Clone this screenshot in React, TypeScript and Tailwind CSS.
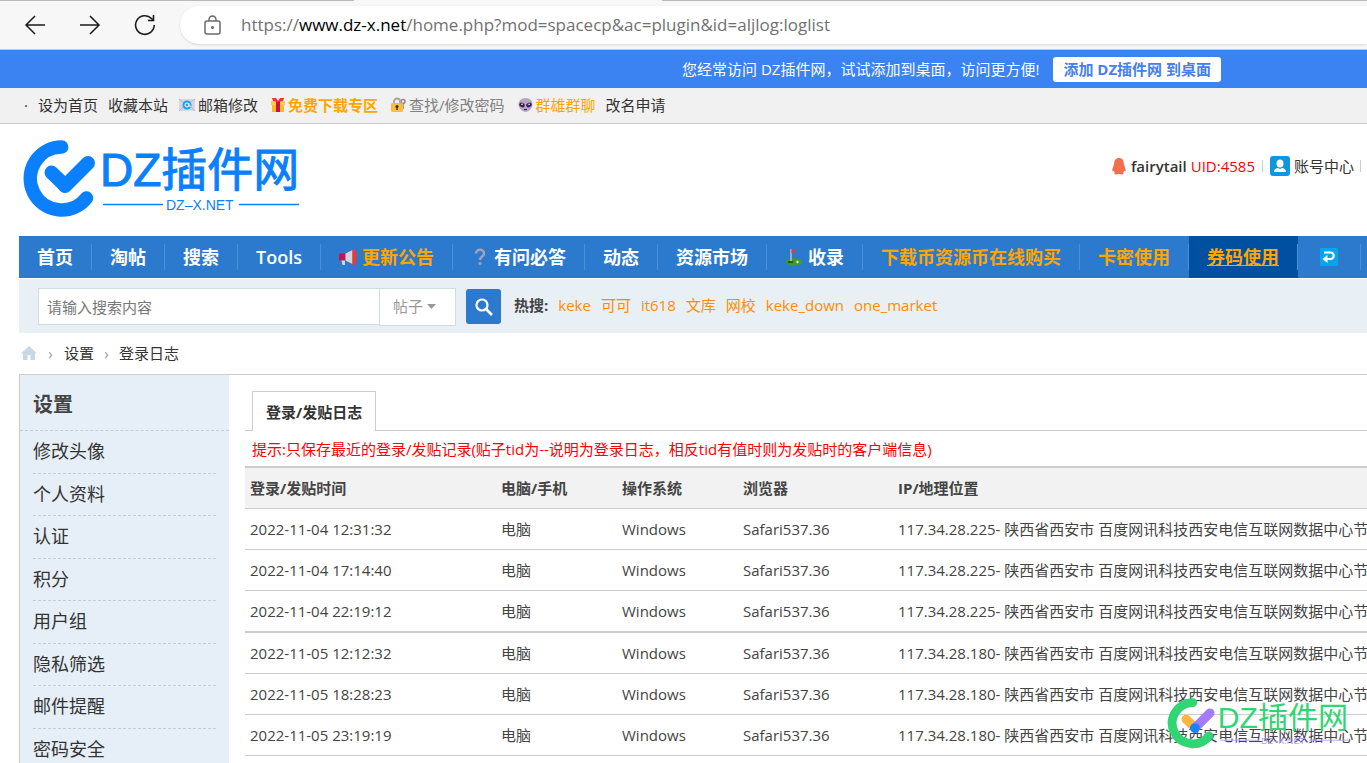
import React, { useState } from 'react';

const MailIcon = () => (
  <svg width="16" height="16" viewBox="0 0 16 16" className="shrink-0">
    <rect y="2" width="16" height="12" fill="#d9d5e2" />
    <path d="M0 2l8 6 8-6M0 14l6-6M16 14l-6-6" stroke="#b9b3c9" fill="none" />
    <circle cx="8" cy="8" r="4.5" fill="#1ba4ef" />
    <circle cx="8" cy="8" r="2" fill="none" stroke="#fff" strokeWidth="1" />
    <path d="M10 6v3q1 1 2 0" stroke="#fff" fill="none" strokeWidth=".8" />
  </svg>
);

const GiftIcon = () => (
  <svg width="14" height="16" viewBox="0 0 14 16" className="shrink-0">
    <rect x="1" y="6" width="12" height="9" fill="#fdb92c" />
    <rect y="4" width="14" height="4" fill="#ffcd45" />
    <rect x="5" y="4" width="4" height="11" fill="#c9123f" />
    <path d="M7 5L2 4 1 1l4 0 2 3 2-3h4l-1 3z" fill="#ef3038" />
  </svg>
);

const LockKeyIcon = () => (
  <svg width="15" height="16" viewBox="0 0 15 16" className="shrink-0">
    <circle cx="12" cy="4.5" r="2" fill="none" stroke="#8f8996" strokeWidth="1.6" />
    <path d="M12 6v6" stroke="#8f8996" strokeWidth="1.6" />
    <path d="M3 8V4.5a3 3 0 0 1 6 0V8" fill="none" stroke="#a8a3ad" strokeWidth="1.8" />
    <rect x="0" y="6" width="12" height="9" rx="1.5" fill="#f9bd3a" />
    <circle cx="6" cy="9.5" r="1.5" fill="#3d2c4a" />
    <path d="M6 10v3" stroke="#3d2c4a" strokeWidth="1.4" />
  </svg>
);

const AlienIcon = () => (
  <svg width="15" height="16" viewBox="0 0 15 16" className="shrink-0">
    <path d="M7.5 1C3 1 .5 4 .5 7.500S4 15 7.500 15s7-4 7-7.500S12 1 7.500 1z" fill="#b4a9bf" />
    <ellipse cx="4" cy="8" rx="2.8" ry="2.2" transform="rotate(25 4 8)" fill="#3d1f55" />
    <ellipse cx="11" cy="8" rx="2.8" ry="2.2" transform="rotate(-25 11 8)" fill="#3d1f55" />
    <circle cx="4" cy="7.3" r=".8" fill="#fff" />
    <circle cx="11" cy="7.3" r=".8" fill="#fff" />
    <path d="M6 12.5h3" stroke="#3d1f55" strokeWidth="1.2" />
  </svg>
);

const MegaphoneIcon = () => (
  <svg width="18" height="18" viewBox="0 0 18 18" className="shrink-0">
    <path d="M0 5.5h6.500v7H0z" fill="#c9124b" />
    <path d="M2.500 12.500H6V17H3.500z" fill="#d8d4de" />
    <path d="M6.500 5.500l7-3.500v14l-7-3.500z" fill="#d8d4de" />
    <path d="M13.500 1.500C15 0 17.500 1 17.500 9s-2.500 9-4 7.500z" fill="#f43535" />
  </svg>
);

const QuestionIcon = () => (
  <svg width="18" height="18" viewBox="0 0 18 18" className="shrink-0">
    <path d="M5 5.500C5 .5 13 .5 13 5.500 13 8.500 9 8.500 9 12" fill="none" stroke="#a9a0b8" strokeWidth="2.500" />
    <circle cx="9" cy="15.500" r="1.600" fill="#a9a0b8" />
  </svg>
);

const GolfIcon = () => (
  <svg width="18" height="18" viewBox="0 0 18 18" className="shrink-0">
    <ellipse cx="9" cy="14" rx="8.500" ry="3.700" fill="#3f9b28" />
    <path d="M6 1v13" stroke="#d6d2dc" strokeWidth="1.200" />
    <path d="M6.500 1l5 2-5 2.500z" fill="#ef3434" />
    <path d="M3 14h5" stroke="#1f3d1c" strokeWidth="1.500" />
    <circle cx="12.500" cy="14" r="1.200" fill="#fff" />
  </svg>
);

const ReturnIcon = () => (
  <svg width="18" height="18" viewBox="0 0 18 18" className="shrink-0">
    <rect width="18" height="18" rx="1.5" fill="#06a5ee" />
    <path d="M4 4.500h6.500a3.200 3.200 0 0 1 0 6.500H6" fill="none" stroke="#fff" strokeWidth="2.200" />
    <path d="M7.500 7v8l-5-4z" fill="#fff" />
  </svg>
);

const UserIcon = () => (
  <svg width="20" height="20" viewBox="0 0 20 20" className="shrink-0">
    <rect width="20" height="20" rx="3" fill="#1296db" />
    <ellipse cx="10" cy="7.500" rx="3.500" ry="4" fill="#fff" />
    <path d="M4 16c0-3 2-4 4-4l2 1 2-1c2 0 4 1 4 4z" fill="#fff" />
  </svg>
);

const QqIcon = () => (
  <svg width="14" height="17" viewBox="0 0 14 17" className="shrink-0">
    <path d="M7 0C4 0 2.200 2.200 2.200 5.500 2 7.500.3 9.500.3 12.500c0 1.200.9 1 1.500.3.2.9.600 1.500 1.100 2-1 .7-.6 1.700 1 1.700 1.200 0 2.300-.2 3.100-.7.8.5 1.900.7 3.100.7 1.600 0 2-1 1-1.700.5-.5.9-1.100 1.100-2 .6.700 1.500.9 1.500-.3 0-3-1.700-5-1.900-7C11.800 2.200 10 0 7 0z" fill="#f3704f" />
  </svg>
);

type LogoProps = {
  className: string;
  ring: string;
  left: string;
  right: string;
  text: string;
  sub: string;
  dot?: string;
  weight?: number;
};

const Logo = ({ className, ring, left, right, text, sub, dot, weight = 0 }: LogoProps) => (
  <svg viewBox="0 0 280 78" className={className} role="img" aria-label="DZ插件网">
    <path d="M38.700 7A31.500 31.500 0 1 0 63.500 58" fill="none" stroke={ring} strokeWidth="13.500" strokeLinecap="round" />
    <path d="M28.500 32.500L42 45.500" stroke={left} strokeWidth="14" strokeLinecap="round" />
    <path d="M42 46L65 23" stroke={right} strokeWidth="14" strokeLinecap="round" />
    {dot && <circle cx="42" cy="46" r="7.5" fill={dot} />}
    <text x="77" y="46" fontSize="46" fill={text} stroke={text} strokeWidth={weight} className="font-['Liberation_Sans','Noto_Sans_CJK_SC',sans-serif]">DZ插件网</text>
    <path d="M80 64.500h60M216 64.500h60" stroke={sub} strokeWidth="1.500" />
    <text x="143" y="70" fontSize="14" fill={sub} className="font-['Liberation_Sans',sans-serif]">DZ–X.NET</text>
  </svg>
);

const navItems = [
  { label: '首页' },
  { label: '淘帖' },
  { label: '搜索' },
  { label: 'Tools' },
  { label: '更新公告', icon: <MegaphoneIcon />, hot: true },
  { label: '有问必答', icon: <QuestionIcon /> },
  { label: '动态' },
  { label: '资源市场' },
  { label: '收录', icon: <GolfIcon /> },
  { label: '下载币资源币在线购买', hot: true },
  { label: '卡密使用', hot: true },
  { label: '券码使用', hot: true, active: true },
];

const hotWords = ['keke', '可可', 'it618', '文库', '网校', 'keke_down', 'one_market'];

const sideItems = ['修改头像', '个人资料', '认证', '积分', '用户组', '隐私筛选', '邮件提醒', '密码安全'];

const logs = [
  { time: '2022-11-04 12:31:32', ip: '117.34.28.225' },
  { time: '2022-11-04 17:14:40', ip: '117.34.28.225' },
  { time: '2022-11-04 22:19:12', ip: '117.34.28.225' },
  { time: '2022-11-05 12:12:32', ip: '117.34.28.180' },
  { time: '2022-11-05 18:28:23', ip: '117.34.28.180' },
  { time: '2022-11-05 23:19:19', ip: '117.34.28.180' },
];

const BrowserBar = () => (
  <div className="bg-[#f7f7f7] border-b border-[#c6c6c6]">
    <div className="flex h-px">
      <div className="w-[354px] bg-[#b9b9b9]" />
      <div className="w-[308px]" />
      <div className="flex-1 bg-[#b9b9b9]" />
    </div>
    <div className="flex items-center h-12 pl-6">
      <button aria-label="后退" className="w-[55px]">
        <svg width="22" height="20" viewBox="0 0 22 20" fill="none" stroke="#1b1b1b" strokeWidth="1.5">
          <path d="M21 10H2M11 1L2 10l9 9" />
        </svg>
      </button>
      <button aria-label="前进" className="w-[55px]">
        <svg width="22" height="20" viewBox="0 0 22 20" fill="none" stroke="#1b1b1b" strokeWidth="1.5">
          <path d="M1 10h19M11 1l9 9-9 9" />
        </svg>
      </button>
      <button aria-label="刷新" className="w-[46px]">
        <svg width="22" height="22" viewBox="0 0 22 22" fill="none" stroke="#1b1b1b" strokeWidth="1.6">
          <path d="M20.200 11A9.300 9.300 0 1 1 17.500 4.500L19.500 6.500" />
          <path d="M19.500 1v5.500H14" />
        </svg>
      </button>
      <div className="flex flex-1 items-center h-[38px] pl-6 rounded-l-full bg-white whitespace-nowrap shadow-sm">
        <svg width="17" height="20" viewBox="0 0 17 20" fill="none" stroke="#6b6b6b" strokeWidth="1.5" className="shrink-0">
          <rect x="1" y="6" width="15" height="13" rx="2" />
          <path d="M5 6V4.500a3.500 3.500 0 0 1 7 0V6" />
          <circle cx="8.500" cy="12.500" r=".8" fill="#6b6b6b" />
        </svg>
        <span className="ml-5 text-[17px] text-[#717171]">
          https://<span className="text-black">www.dz-x.net</span>/home.php?mod=spacecp&amp;ac=plugin&amp;id=aljlog:loglist
        </span>
      </div>
    </div>
  </div>
);

const TopBar = () => (
  <>
    <div className="flex items-center justify-end h-[38px] pr-[146px] gap-[14px] bg-[#3b82f2] text-white">
      <span>您经常访问 DZ插件网，试试添加到桌面，访问更方便!</span>
      <button className="h-[25px] px-[10px] rounded-[3px] bg-white font-bold text-[#4480ee]">
        添加 DZ插件网 到桌面
      </button>
    </div>
    <div className="flex items-center h-9 pl-6 pb-0.5 bg-[#f1f1f1] border-b border-[#cdcdcd]">
      <span className="w-[14px]">·</span>
      <a href="#" className="mr-[10px]">设为首页</a>
      <a href="#" className="mr-[11px]">收藏本站</a>
      <a href="#" className="flex items-center gap-[3px] mr-[13px]"><MailIcon />邮箱修改</a>
      <a href="#" className="flex items-center gap-[3px] mr-[13px] font-bold text-[#ffa500]"><GiftIcon />免费下载专区</a>
      <a href="#" className="flex items-center gap-[3px] mr-[13px] text-[#808080]"><LockKeyIcon />查找/修改密码</a>
      <a href="#" className="flex items-center gap-[3px] mr-[10px] text-[#ffa500]"><AlienIcon />群雄群聊</a>
      <a href="#">改名申请</a>
    </div>
  </>
);

const Header = () => (
  <header className="flex justify-between h-28 pl-[23px] pr-[6px] pt-4">
    <a href="#" className="h-[78px]">
      <Logo className="w-[280px] h-[78px]" ring="#0a80ff" left="#0a80ff" right="#0a80ff" text="#0a80ff" sub="#0a80ff" weight={1} />
    </a>
    <div className="flex items-center h-[52px]">
      <QqIcon />
      <a href="#" className="ml-[5px] font-semibold">fairytail</a>
      <a href="#" className="ml-1 text-[#f00]">UID:4585</a>
      <span className="w-px h-3 mx-[7px] bg-[#ccc]" />
      <UserIcon />
      <a href="#" className="ml-1">账号中心</a>
      <span className="w-px h-3 ml-[6px] bg-[#ccc]" />
    </div>
  </header>
);

const Navbar = () => (
  <nav className="flex h-[42px] ml-[19px] bg-[#2b7acd] text-lg font-semibold text-white overflow-hidden">
    {navItems.map((item) => (
      <a
        key={item.label}
        href="#"
        className={`relative flex shrink-0 items-center gap-[5px] pl-[18px] pr-[19px] after:absolute after:right-0 after:top-2 after:h-[26px] after:w-px after:bg-[#4a8fd8] ${
          item.hot ? 'text-[#ffa500]' : ''
        } ${item.active ? 'bg-[#0050a1] underline' : ''}`}
      >
        {item.icon}
        {item.label}
      </a>
    ))}
    <a href="#" aria-label="返回" className="flex shrink-0 items-center px-[22px]">
      <ReturnIcon />
    </a>
    <span className="shrink-0 w-px h-[26px] mt-2 bg-[#4a8fd8]" />
  </nav>
);

const SearchBar = () => {
  const [keyword, setKeyword] = useState('');

  return (
    <div className="flex items-start h-[54px] mt-px ml-[19px] pl-[19px] pt-[9px] bg-[#e8eff5]">
      <input
        type="text"
        aria-label="搜索内容"
        placeholder="请输入搜索内容"
        value={keyword}
        onChange={(e) => setKeyword(e.target.value)}
        className="w-[342px] h-[37px] px-2 bg-white border border-[#cddde4] placeholder:text-[#777]"
      />
      <div className="relative -ml-px">
        <select aria-label="搜索类型" className="appearance-none w-[77px] h-[38px] pl-[13px] pb-0.5 bg-white border border-[#cddde4] text-[#999]">
          <option>帖子</option>
        </select>
        <svg width="9" height="5" viewBox="0 0 9 5" className="absolute right-5 top-4 pointer-events-none">
          <path d="M0 0h9L4.500 5z" fill="#999" />
        </svg>
      </div>
      <button aria-label="搜索" className="flex items-center justify-center w-[35px] h-[35px] mt-px ml-[10px] rounded-[3px] bg-[#2b7acd]">
        <svg width="18" height="18" viewBox="0 0 18 18" fill="none" stroke="#fff">
          <circle cx="7" cy="7" r="5.5" strokeWidth="2.2" />
          <path d="M11 11l6 6" strokeWidth="2.6" />
        </svg>
      </button>
      <div className="flex items-center gap-[10px] h-[35px] pb-0.5 ml-[13px] text-[#ff8c00] whitespace-nowrap">
        <strong className="text-[#444]">热搜:</strong>
        {hotWords.map((word) => (
          <a key={word} href="#">{word}</a>
        ))}
      </div>
    </div>
  );
};

const Breadcrumb = () => (
  <div className="flex items-center h-[41px] pb-0.5 pl-[21px]">
    <svg width="16" height="14" viewBox="0 0 16 14">
      <path d="M8 0l8 7.500h-2V14H9.500V9h-3v5H2V7.500H0z" fill="#c5d8e4" />
    </svg>
    <span className="w-[27px] text-center text-[#999]">›</span>
    <a href="#">设置</a>
    <span className="w-[25px] text-center text-[#999]">›</span>
    <a href="#">登录日志</a>
  </div>
);

const Sidebar = () => (
  <aside className="w-[210px] shrink-0 bg-[#e6eff7] border-l border-[#cdcdcd]">
    <h2 className="flex items-center h-14 pl-[13px] pt-1 border-b border-dashed border-[#c5cdd2] text-xl font-bold text-[#444]">
      设置
    </h2>
    <ul className="mx-[13px] text-lg">
      {sideItems.map((item) => (
        <li key={item} className="flex items-center pb-0.5 odd:h-[43px] even:h-[42px] border-b border-dashed border-[#c5cdd2]">
          <a href="#">{item}</a>
        </li>
      ))}
    </ul>
  </aside>
);

const LogTable = () => (
  <table className="w-full table-fixed border-t-2 border-[#cdcdcd] text-left text-[#444] whitespace-nowrap">
    <colgroup>
      <col className="w-[251px]" />
      <col className="w-[121px]" />
      <col className="w-[121px]" />
      <col className="w-[155px]" />
      <col />
    </colgroup>
    <thead>
      <tr className="h-[41px] bg-[#f2f2f2] border-b border-[#cdcdcd]">
        <th className="px-[5px]">登录/发贴时间</th>
        <th className="px-[5px]">电脑/手机</th>
        <th className="px-[5px]">操作系统</th>
        <th className="px-[5px]">浏览器</th>
        <th className="px-[5px]">IP/地理位置</th>
      </tr>
    </thead>
    <tbody>
      {logs.map((log) => (
        <tr key={log.time} className="h-[41px] border-b border-[#cdcdcd] nth-3:h-[42px] nth-3:border-b-2">
          <td className="px-[5px]">{log.time}</td>
          <td className="px-[5px]">电脑</td>
          <td className="px-[5px]">Windows</td>
          <td className="px-[5px]">Safari537.36</td>
          <td className="px-[5px]">{log.ip}- 陕西省西安市 百度网讯科技西安电信互联网数据中心节点</td>
        </tr>
      ))}
    </tbody>
  </table>
);

const App = () => {
  return (
    <div className="relative h-screen overflow-hidden bg-white font-['Open_Sans','Noto_Sans_CJK_SC',sans-serif] text-[15px] leading-5 text-[#333]">
      <BrowserBar />
      <TopBar />
      <Header />
      <Navbar />
      <SearchBar />
      <Breadcrumb />

      <main className="flex ml-[19px] border-t border-[#cdcdcd]">
        <Sidebar />
        <section className="flex-1 min-w-0 ml-4 pt-4">
          <div className="flex pl-[7px] border-b border-[#cdcdcd]">
            <a href="#" className="flex items-center h-10 -mb-px px-[13px] border border-b-0 border-[#cdcdcd] bg-white font-bold">
              登录/发贴日志
            </a>
          </div>
          <p className="flex items-center h-[35px] pl-[7px] text-[#f00] whitespace-nowrap">
            提示:只保存最近的登录/发贴记录(贴子tid为--说明为登录日志，相反tid有值时则为发贴时的客户端信息)
          </p>
          <LogTable />
        </section>
      </main>

      {/* Watermark */}
      <div className="absolute right-4 bottom-[14px] pointer-events-none">
        <Logo className="w-[184px] h-[51px]" ring="#2fd673" left="#ffb63d" right="#a47cfb" text="#2fd673" sub="#b9a2fa" dot="#1784ff" />
      </div>
    </div>
  );
};

export default App;
